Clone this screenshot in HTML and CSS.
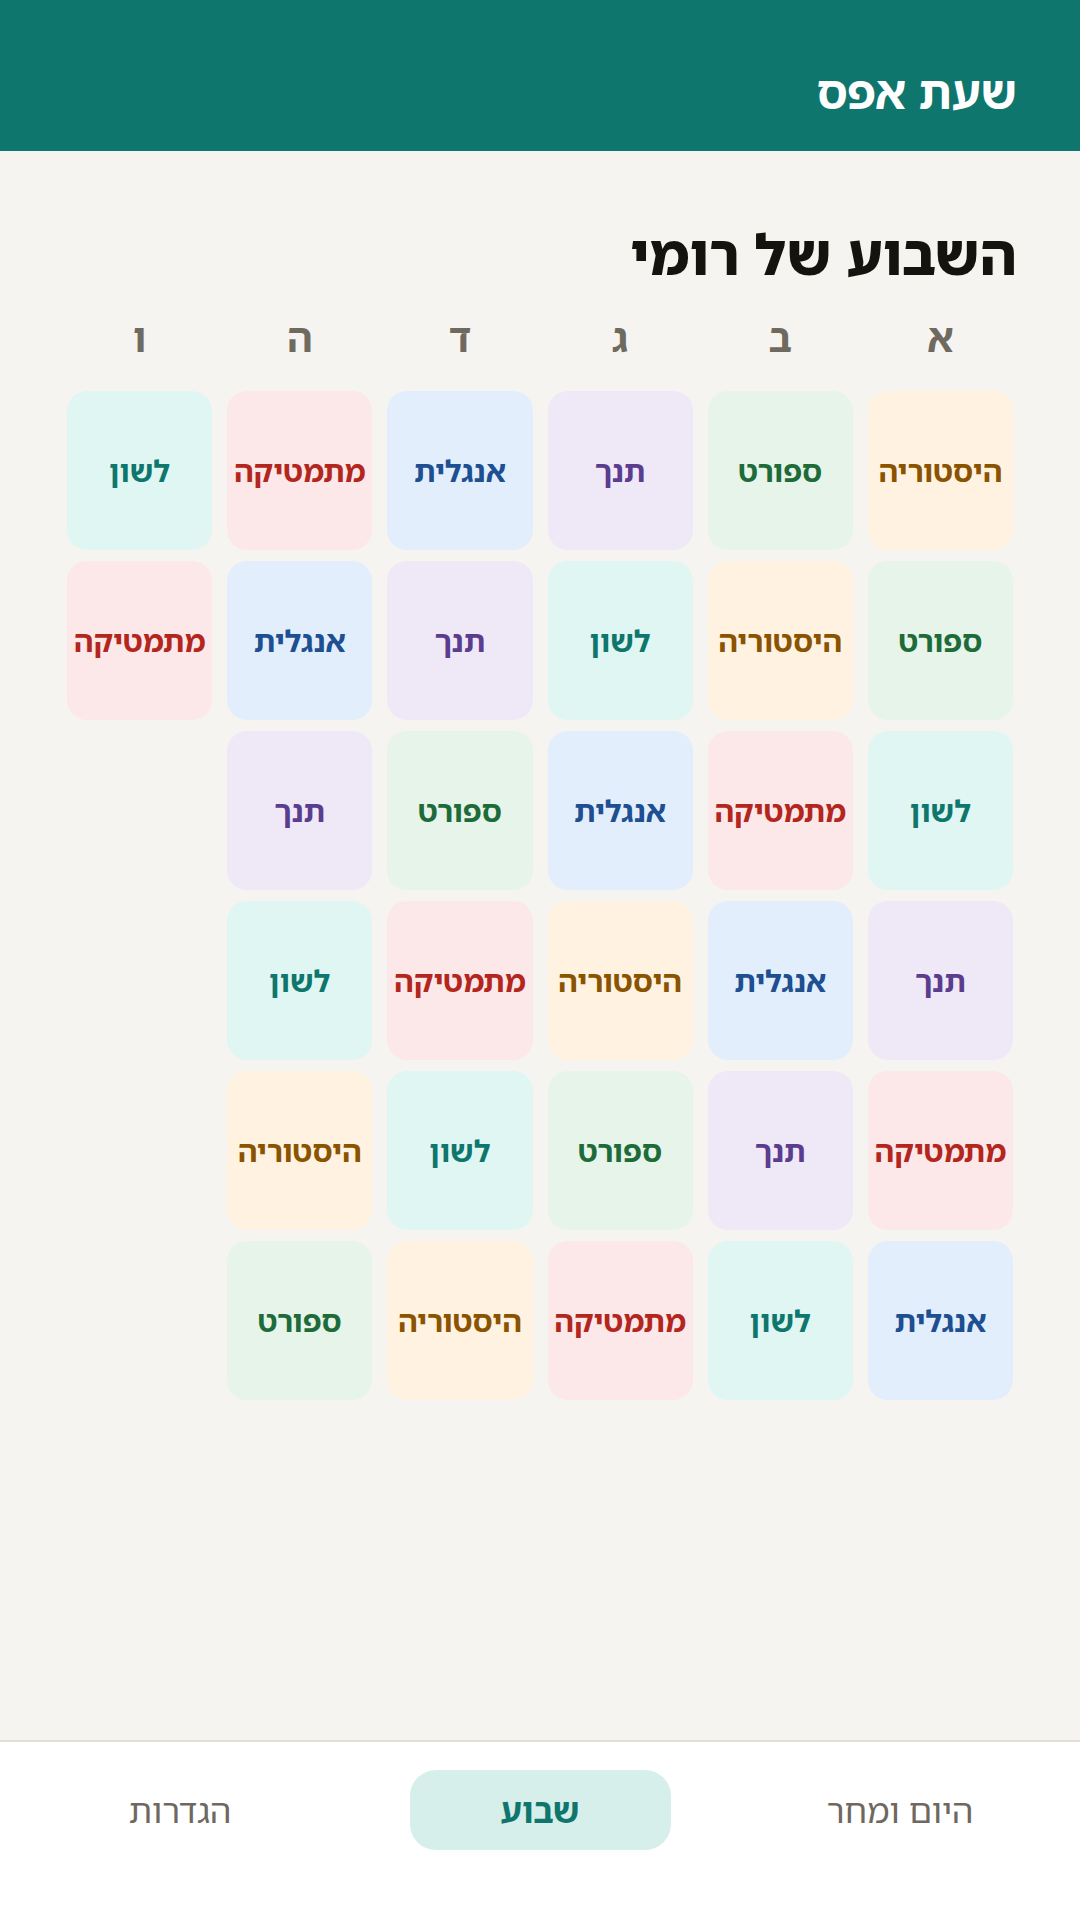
FILE: index.html
```html
<!DOCTYPE html>
<html lang="he" dir="rtl">
<head>
<meta charset="utf-8">
<title>שעת אפס</title>
<link rel="stylesheet" href="styles.css">
</head>
<body>
<div class="app">
  <header class="topbar">
    <h1 class="brand">שעת אפס</h1>
  </header>
  <main class="content">
    <h2 class="page-title">השבוע של רומי</h2>
    <div class="week">
      <div class="day">
        <div class="day-label">א</div>
        <div class="cell hist">היסטוריה</div>
        <div class="cell sport">ספורט</div>
        <div class="cell lashon">לשון</div>
        <div class="cell tanach">תנך</div>
        <div class="cell math">מתמטיקה</div>
        <div class="cell eng">אנגלית</div>
      </div>
      <div class="day">
        <div class="day-label">ב</div>
        <div class="cell sport">ספורט</div>
        <div class="cell hist">היסטוריה</div>
        <div class="cell math">מתמטיקה</div>
        <div class="cell eng">אנגלית</div>
        <div class="cell tanach">תנך</div>
        <div class="cell lashon">לשון</div>
      </div>
      <div class="day">
        <div class="day-label">ג</div>
        <div class="cell tanach">תנך</div>
        <div class="cell lashon">לשון</div>
        <div class="cell eng">אנגלית</div>
        <div class="cell hist">היסטוריה</div>
        <div class="cell sport">ספורט</div>
        <div class="cell math">מתמטיקה</div>
      </div>
      <div class="day">
        <div class="day-label">ד</div>
        <div class="cell eng">אנגלית</div>
        <div class="cell tanach">תנך</div>
        <div class="cell sport">ספורט</div>
        <div class="cell math">מתמטיקה</div>
        <div class="cell lashon">לשון</div>
        <div class="cell hist">היסטוריה</div>
      </div>
      <div class="day">
        <div class="day-label">ה</div>
        <div class="cell math">מתמטיקה</div>
        <div class="cell eng">אנגלית</div>
        <div class="cell tanach">תנך</div>
        <div class="cell lashon">לשון</div>
        <div class="cell hist">היסטוריה</div>
        <div class="cell sport">ספורט</div>
      </div>
      <div class="day">
        <div class="day-label">ו</div>
        <div class="cell lashon">לשון</div>
        <div class="cell math">מתמטיקה</div>
      </div>
    </div>
  </main>
  <nav class="tabbar">
    <div class="tab">היום ומחר</div>
    <div class="tab"><span class="tab-pill">שבוע</span></div>
    <div class="tab">הגדרות</div>
  </nav>
</div>
</body>
</html>
```
FILE: styles.css
```css
* { box-sizing: border-box; }
html, body {
  margin: 0;
  padding: 0;
}
body {
  font-family: "Noto Sans Hebrew", "Open Sans", "DejaVu Sans", sans-serif;
  background: #f6f4f0;
  color: #15130e;
}
.app {
  width: 1080px;
  height: 1920px;
  display: flex;
  flex-direction: column;
}
.topbar {
  height: 151px;
  flex: none;
  background: #0f766e;
  display: flex;
  align-items: center;
  padding: 30px 63px 0;
}
.brand {
  margin: 0;
  color: #ffffff;
  font-size: 46px;
  font-weight: 700;
  line-height: 1;
}
.content {
  flex: 1;
  padding: 0 63px;
}
.page-title {
  margin: 74px 0 0;
  font-size: 56px;
  font-weight: 800;
  line-height: 1;
  color: #15130e;
}
.week {
  margin: 36px 4px 0;
  display: grid;
  grid-template-columns: repeat(6, 1fr);
  column-gap: 15px;
  align-items: start;
}
.day {
  display: flex;
  flex-direction: column;
  gap: 11px;
}
.day-label {
  text-align: center;
  font-size: 39px;
  font-weight: 700;
  color: #6f6a60;
  line-height: 1;
  height: 40px;
  margin-bottom: 23px;
}
.cell {
  height: 159px;
  border-radius: 20px;
  display: flex;
  align-items: center;
  justify-content: center;
  font-size: 30px;
  font-weight: 700;
  white-space: nowrap;
}
.hist { background: #fff2e0; color: #8a5300; }
.sport { background: #e7f4ea; color: #1e6b3a; }
.tanach { background: #efe8f6; color: #5b3d8f; }
.lashon { background: #e0f6f2; color: #0f766e; }
.math { background: #fce8e8; color: #b3261e; }
.eng { background: #e2eefc; color: #1d4f91; }
.tabbar {
  height: 180px;
  flex: none;
  background: #ffffff;
  border-top: 2px solid #e3dfd5;
  display: grid;
  grid-template-columns: repeat(3, 1fr);
  align-items: start;
  padding-top: 28px;
}
.tab {
  height: 80px;
  display: flex;
  align-items: center;
  justify-content: center;
  font-size: 34px;
  color: #6e685f;
}
.tab-pill {
  width: 261px;
  height: 80px;
  border-radius: 26px;
  background: #d6efea;
  color: #0f766e;
  font-weight: 700;
  display: flex;
  align-items: center;
  justify-content: center;
}
```
